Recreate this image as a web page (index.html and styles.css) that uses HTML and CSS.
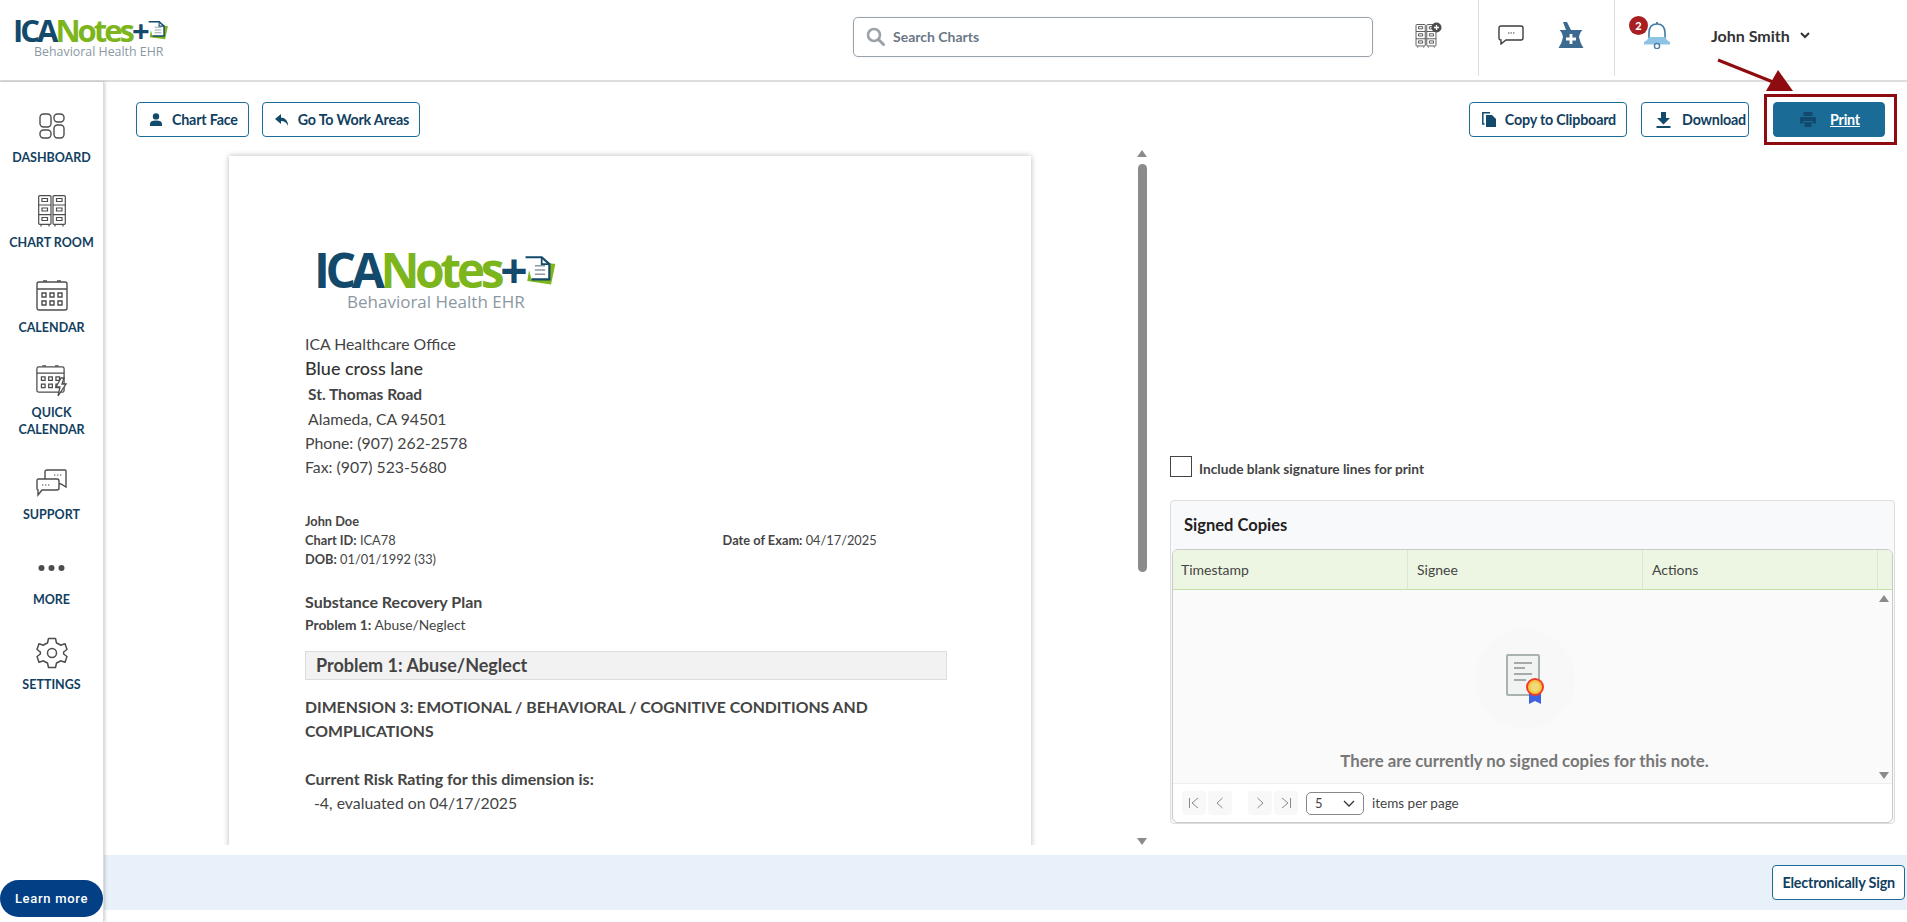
FILE: index.html
```html
<!DOCTYPE html>
<html lang="en">
<head>
    <meta charset="UTF-8">
    <title>ICANotes - Print Note</title>
    <link rel="stylesheet" href="styles.css">
</head>
<body>
    <svg class="defs" width="0" height="0">
        <symbol id="doc-mark" viewBox="0 0 40 40">
            <path d="M9 9 L38 13 L33 37 L5 33 Z" fill="#7db51c"/>
            <path d="M3 5 H22 L31 13 V31 H10" fill="#fff" stroke="#134a6b" stroke-width="2.6"/>
            <path d="M22 5 V13 H31" fill="none" stroke="#134a6b" stroke-width="2"/>
            <path d="M14 15 H26 M14 20 H26 M14 25 H26" stroke="#8b98a3" stroke-width="1.6"/>
        </symbol>
        <symbol id="cabinet" viewBox="0 0 28 32">
            <g fill="none" stroke="#4d4d4d" stroke-width="1.2">
                <rect x="0.7" y="0.7" width="12.3" height="28.6" rx="1"/>
                <rect x="15" y="0.7" width="12.3" height="28.6" rx="1"/>
                <path d="M0.7 10 H13 M0.7 19.7 H13 M15 10 H27.3 M15 19.7 H27.3 M3 30 V31.5 M11 30 V31.5 M17 30 V31.5 M25 30 V31.5"/>
                <path d="M4 3.5 H9.5 V6.5 H4 Z M4 13 H9.5 V16 H4 Z M4 22.5 H9.5 V25.5 H4 Z M18.5 3.5 H24 V6.5 H18.5 Z M18.5 13 H24 V16 H18.5 Z M18.5 22.5 H24 V25.5 H18.5 Z"/>
            </g>
        </symbol>
        <symbol id="calendar" viewBox="0 0 32 32">
            <g fill="none" stroke="#4d4d4d" stroke-width="1.4">
                <rect x="1" y="2" width="30" height="28" rx="2"/>
                <path d="M1 9 H31 M7 1 H11 M21 1 H25"/>
                <path d="M6 13 H10 V17 H6 Z M14 13 H18 V17 H14 Z M22 13 H26 V17 H22 Z M6 21 H10 V25 H6 Z M14 21 H18 V25 H14 Z M22 21 H26 V25 H22 Z"/>
            </g>
        </symbol>
    </svg>

    <header class="topbar">
        <div class="logo logo-small">
            <div class="logo-main"><span class="logo-blue">ICA</span><span class="logo-green">Notes</span><span class="logo-blue logo-plus">+</span><svg class="logo-doc"><use href="#doc-mark"/></svg></div>
            <div class="logo-sub">Behavioral Health EHR</div>
        </div>
        <div class="search">
            <svg width="19" height="19" viewBox="0 0 19 19"><circle cx="8" cy="8" r="6" fill="none" stroke="#9aa1a8" stroke-width="2.6"/><path d="M12.5 12.5 L17.5 17.5" stroke="#9aa1a8" stroke-width="3" stroke-linecap="round"/></svg>
            <span>Search Charts</span>
        </div>
        <div class="top-icons">
            <div class="top-group first-group">
                <svg width="27" height="26" viewBox="0 0 27 26">
                    <use href="#cabinet" x="0" y="2" width="22" height="24"/>
                    <circle cx="21.5" cy="5.5" r="5" fill="#4d4d4d"/>
                    <path d="M19 5.5 H24 M21.5 3 V8" stroke="#fff" stroke-width="1.3"/>
                </svg>
            </div>
            <div class="top-group middle-group">
                <svg width="26" height="20" viewBox="0 0 26 20"><path d="M3 1 H23 Q25 1 25 3 V13 Q25 15 23 15 H8 L3 19 V15 Q1 15 1 13 V3 Q1 1 3 1 Z" fill="#fff" stroke="#3d3d3d" stroke-width="1.4"/><path d="M10 8 H11.4 M12.5 8 H13.9 M15 8 H16.4" stroke="#3d3d3d"/></svg>
                <svg width="26" height="27" viewBox="0 0 26 27"><path d="M5 0 L9 0 L13 8 H24.5 Q22 10 21 15 Q22 21 25.5 26 H0.5 Q4 21 5 15 Q4 10 1.5 8 H8 Z" fill="#3c6a90"/><path d="M13 12 V22 M8 17 H18" stroke="#fff" stroke-width="2.8"/></svg>
            </div>
            <div class="top-group user-group">
                <div class="bell">
                    <span class="badge">2</span>
                    <svg width="28" height="28" viewBox="0 0 28 28"><path d="M6 21 V12 C6 6 9 3 14 3 C19 3 22 6 22 12 V21" fill="none" stroke="#3f7aa6" stroke-width="1.6"/><path d="M1 21 Q5 19 6 16 H22 Q23 19 27 21 V23.5 H1 Z" fill="#8fc3e6"/><circle cx="14" cy="25" r="2.6" fill="none" stroke="#4c7ea5" stroke-width="1.4"/><path d="M14 1 V3" stroke="#4c7ea5" stroke-width="2"/></svg>
                </div>
                <span class="user-name">John Smith</span>
                <svg width="10" height="7" viewBox="0 0 10 7"><path d="M1 1 L5 5 L9 1" fill="none" stroke="#333" stroke-width="2"/></svg>
            </div>
        </div>
    </header>

    <div class="layout">
        <nav class="sidebar">
            <a class="nav-item">
                <svg width="26" height="26" viewBox="0 0 26 26"><g fill="none" stroke="#4d4d4d" stroke-width="1.4"><rect x="1" y="1" width="11" height="13" rx="3.5"/><rect x="15" y="1" width="10" height="8" rx="3.5"/><rect x="1" y="17" width="11" height="8" rx="3.5"/><rect x="15" y="12" width="10" height="13" rx="3.5"/></g></svg>
                <span>DASHBOARD</span>
            </a>
            <a class="nav-item">
                <svg width="28" height="32"><use href="#cabinet"/></svg>
                <span>CHART ROOM</span>
            </a>
            <a class="nav-item">
                <svg width="32" height="32"><use href="#calendar"/></svg>
                <span>CALENDAR</span>
            </a>
            <a class="nav-item">
                <svg width="31" height="32" viewBox="0 0 31 32"><use href="#calendar" width="29" height="29"/><path d="M25 13 L20 22 H24 L22 31 L30 19 H26 L28 13 Z" fill="#fff" stroke="#4d4d4d" stroke-width="1.3"/></svg>
                <span>QUICK<br>CALENDAR</span>
            </a>
            <a class="nav-item">
                <svg width="31" height="28" viewBox="0 0 31 28"><g fill="#fff" stroke="#4d4d4d" stroke-width="1.4"><path d="M11 1 H29 Q30 1 30 2 V18 L25 15 H11 Q9 15 9 13 V3 Q9 1 11 1 Z"/><path d="M2 10 H21 Q23 10 23 12 V19 Q23 21 21 21 H6 L2 26 V21 Q1 21 1 19 V12 Q1 10 2 10 Z"/></g><path d="M18 6 H19.4 M21 6 H22.4 M24 6 H25.4 M6 16 H7.4 M9 16 H10.4 M12 16 H13.4" stroke="#4d4d4d"/></svg>
                <span>SUPPORT</span>
            </a>
            <a class="nav-item">
                <svg width="27" height="26" viewBox="0 0 27 26"><circle cx="3.5" cy="13" r="3" fill="#4d4d4d"/><circle cx="13.5" cy="13" r="3" fill="#4d4d4d"/><circle cx="23.5" cy="13" r="3" fill="#4d4d4d"/></svg>
                <span>MORE</span>
            </a>
            <a class="nav-item">
                <svg width="32" height="32" viewBox="0 0 32 32"><g fill="none" stroke="#4d4d4d" stroke-width="1.5" stroke-linejoin="round"><path d="M12.5 1.5 H19.5 L20.5 6 Q23 7 24.5 8.2 L29 6.8 L31 12.5 L27.6 15 Q27.8 16 27.6 17 L31 19.5 L29 25.2 L24.5 23.8 Q23 25 20.5 26 L19.5 30.5 H12.5 L11.5 26 Q9 25 7.5 23.8 L3 25.2 L1 19.5 L4.4 17 Q4.2 16 4.4 15 L1 12.5 L3 6.8 L7.5 8.2 Q9 7 11.5 6 Z"/><circle cx="16" cy="16" r="4.5"/></g></svg>
                <span>SETTINGS</span>
            </a>
            <button class="learn-more">Learn more</button>
        </nav>

        <main class="content">
            <div class="toolbar">
                <button class="btn">
                    <svg width="14" height="13" viewBox="0 0 14 13"><circle cx="7" cy="3.4" r="3.2" fill="#134a6b"/><path d="M1 13 V11 Q1 7.6 7 7.6 Q13 7.6 13 11 V13 Z" fill="#134a6b"/></svg>
                    Chart Face
                </button>
                <button class="btn">
                    <svg width="14" height="12" viewBox="0 0 14 12"><path d="M6 0 L0 5 L6 10 V7 Q11 7 13 12 Q13 4 6 3.4 Z" fill="#134a6b"/></svg>
                    Go To Work Areas
                </button>
                <div class="toolbar-right">
                    <button class="btn">
                        <svg width="14" height="15" viewBox="0 0 14 15"><path d="M4 3 H10 L14 7 V15 H4 Z" fill="#134a6b"/><path d="M2.5 12 H0.8 V0.8 H8" fill="none" stroke="#134a6b" stroke-width="1.5"/></svg>
                        Copy to Clipboard
                    </button>
                    <button class="btn btn-wide">
                        <svg width="15" height="16" viewBox="0 0 15 16"><path d="M5 0 H10 V6 H14 L7.5 12.5 L1 6 H5 Z M0.5 14 H14.5 V16 H0.5 Z" fill="#134a6b"/></svg>
                        Download
                    </button>
                    <button class="btn btn-print">
                        <svg width="16" height="15" viewBox="0 0 16 15"><path d="M3.5 0 H12.5 V4 H3.5 Z M1.5 5 H14.5 Q16 5 16 6.5 V11.5 H12.5 V9 H3.5 V11.5 H0 V6.5 Q0 5 1.5 5 Z M4.5 10 H11.5 V15 H4.5 Z" fill="#124a6e"/></svg>
                        <span>Print</span>
                    </button>
                </div>
            </div>

            <div class="panes">
                <div class="doc-pane">
                    <div class="doc-scroll">
                        <article class="paper">
                            <div class="logo logo-large">
                                <div class="logo-main"><span class="logo-blue">ICA</span><span class="logo-green">Notes</span><span class="logo-blue logo-plus">+</span><svg class="logo-doc"><use href="#doc-mark"/></svg></div>
                                <div class="logo-sub">Behavioral Health EHR</div>
                            </div>
                            <div class="office">
                                <p>ICA Healthcare Office</p>
                                <p class="office-name">Blue cross lane</p>
                                <p class="office-street">St. Thomas Road</p>
                                <p class="indent">Alameda, CA 94501</p>
                                <p>Phone: (907) 262-2578</p>
                                <p>Fax: (907) 523-5680</p>
                            </div>
                            <div class="patient">
                                <p><b>John Doe</b></p>
                                <p class="patient-row"><span><b>Chart ID:</b> ICA78</span><span class="exam-date"><b>Date of Exam:</b> 04/17/2025</span></p>
                                <p><b>DOB:</b> 01/01/1992 (33)</p>
                            </div>
                            <h3 class="plan-title">Substance Recovery Plan</h3>
                            <p class="plan-problem"><b>Problem 1:</b> Abuse/Neglect</p>
                            <h2 class="problem-box">Problem 1: Abuse/Neglect</h2>
                            <p class="dimension">DIMENSION 3: EMOTIONAL / BEHAVIORAL / COGNITIVE CONDITIONS AND COMPLICATIONS</p>
                            <p class="risk-label">Current Risk Rating for this dimension is:</p>
                            <p class="risk-value">-4, evaluated on 04/17/2025</p>
                        </article>
                    </div>
                    <div class="scrollbar">
                        <i class="arrow-up"></i>
                        <div class="track"><div class="thumb"></div></div>
                        <i class="arrow-down"></i>
                    </div>
                </div>

                <aside class="side-pane">
                    <label class="blank-lines"><span class="checkbox"></span>Include blank signature lines for print</label>
                    <section class="card">
                        <h4 class="card-title">Signed Copies</h4>
                        <div class="grid">
                            <div class="grid-head">
                                <div class="col">Timestamp</div>
                                <div class="col">Signee</div>
                                <div class="col">Actions</div>
                                <div class="col-gap"></div>
                            </div>
                            <div class="grid-body">
                                <div class="empty">
                                    <div class="empty-icon">
                                        <svg width="38" height="50" viewBox="0 0 38 50">
                                            <rect x="1" y="1" width="32" height="40" rx="1" fill="#f1f3f3" stroke="#aab2b0" stroke-width="2"/>
                                            <path d="M8 9 H26 M8 14 H19 M8 20 H26 M8 26 H20" stroke="#a3aaa9" stroke-width="1.8"/>
                                            <path d="M23 38 H35 V50 L29 47 L23 50 Z" fill="#3f62e0"/>
                                            <circle cx="29" cy="33" r="9" fill="#ef3b2d"/>
                                            <circle cx="29" cy="33" r="7" fill="#f6c93c"/>
                                            <circle cx="29" cy="33" r="4.5" fill="#efd97e"/>
                                        </svg>
                                    </div>
                                    <p>There are currently no signed copies for this note.</p>
                                </div>
                                <div class="grid-scroll">
                                    <i class="tri-up"></i>
                                    <i class="tri-down"></i>
                                </div>
                            </div>
                            <div class="pager">
                                <span class="page-btn"><svg width="12" height="12" viewBox="0 0 12 12"><path d="M1.5 1 V11 M10 1 L4 6 L10 11" fill="none" stroke="#8a8a8a"/></svg></span>
                                <span class="page-btn"><svg width="12" height="12" viewBox="0 0 12 12"><path d="M8.5 1 L3 6 L8.5 11" fill="none" stroke="#8a8a8a"/></svg></span>
                                <span class="page-btn page-next"><svg width="12" height="12" viewBox="0 0 12 12"><path d="M3.5 1 L9 6 L3.5 11" fill="none" stroke="#8a8a8a"/></svg></span>
                                <span class="page-btn"><svg width="12" height="12" viewBox="0 0 12 12"><path d="M2 1 L8 6 L2 11 M10.5 1 V11" fill="none" stroke="#8a8a8a"/></svg></span>
                                <span class="page-select">5<svg width="12" height="7" viewBox="0 0 12 7"><path d="M1 1 L6 6 L11 1" fill="none" stroke="#333" stroke-width="1.3"/></svg></span>
                                <span class="page-label">items per page</span>
                            </div>
                        </div>
                    </section>
                </aside>
            </div>

            <div class="sign-bar">
                <button class="btn btn-sign">Electronically Sign</button>
            </div>
        </main>
    </div>

    <!-- callout on the print button -->
    <div class="print-callout"></div>
    <svg class="print-arrow" width="90" height="40" viewBox="0 0 90 40">
        <path d="M2 2 L62 26" stroke="#8e0b0f" stroke-width="3"/>
        <path d="M77 33 L50 33 L62 12 Z" fill="#8e0b0f"/>
    </svg>
</body>
</html>
```

FILE: styles.css
```css
* {
    box-sizing: border-box;
}
html, body {
    height: 100%;
}
body {
    margin: 0;
    font-family: "Lato", "Open Sans", sans-serif;
    color: #444;
    background: #fff;
    overflow: hidden;
    display: flex;
    flex-direction: column;
}
p, h2, h3, h4 {
    margin: 0;
}
.defs {
    display: block;
    height: 0;
}

/* Logo */
.logo {
    font-family: "Open Sans", sans-serif;
}
.logo-main {
    display: flex;
    align-items: center;
    font-weight: 700;
    white-space: nowrap;
}
.logo-blue {
    color: #134a6b;
}
.logo-green {
    color: #7db51c;
}
.logo-sub {
    color: #8b98a3;
    white-space: nowrap;
}
.logo-doc {
    flex: none;
}
.logo-small {
    width: 165px;
    margin-left: 13px;
}
.logo-small .logo-main {
    font-size: 31px;
    letter-spacing: -3px;
    line-height: 30px;
}
.logo-small .logo-doc {
    width: 22px;
    height: 24px;
    margin-left: 0;
}
.logo-small .logo-sub {
    font-size: 12.4px;
    margin-left: 21px;
    line-height: 14px;
}
.logo-large {
    width: 260px;
    margin-left: 9px;
}
.logo-large .logo-main {
    font-size: 48px;
    letter-spacing: -4.4px;
    line-height: 42px;
}
.logo-large .logo-doc {
    width: 34px;
    height: 36px;
    margin-left: 0;
}
.logo-large .logo-sub {
    font-size: 17px;
    margin: 1px 0 0 33px;
    line-height: 20px;
}

/* Top bar */
.topbar {
    height: 82px;
    flex: none;
    display: flex;
    align-items: center;
    padding-bottom: 7px;
    border-bottom: 2px solid #ddd;
}
.search {
    width: 520px;
    height: 40px;
    margin-left: 675px;
    display: flex;
    align-items: center;
    gap: 8px;
    padding-left: 12px;
    border: 1px solid #9aa3ad;
    border-radius: 5px;
    box-shadow: 0 0 2px rgba(0,0,0,0.1);
    color: #6b7785;
    font-size: 14px;
    font-weight: 700;
}
.top-icons {
    display: flex;
    align-self: flex-start;
    height: 76px;
}
.top-group {
    display: flex;
    align-items: center;
    padding-bottom: 6px;
}
.first-group {
    margin-left: 42px;
    padding-right: 36px;
    border-right: 1px solid #ddd;
}
.middle-group {
    gap: 34px;
    padding: 0 30px 6px 19px;
    border-right: 1px solid #ddd;
}
.user-group {
    padding-left: 28px;
}
.bell {
    position: relative;
    height: 28px;
    margin-top: -1px;
}
.badge {
    position: absolute;
    left: -14px;
    top: -5px;
    width: 19px;
    height: 19px;
    border-radius: 50%;
    background: #a81f22;
    color: #fff;
    font-size: 11px;
    font-weight: 900;
    line-height: 19px;
    text-align: center;
}
.user-name {
    margin: 0 10px 0 40px;
    font-size: 16px;
    font-weight: 700;
    color: #333;
    white-space: nowrap;
}

/* Layout */
.layout {
    flex: 1;
    display: flex;
    min-height: 0;
}

/* Sidebar */
.sidebar {
    width: 104px;
    flex: none;
    display: flex;
    flex-direction: column;
    align-items: center;
    padding: 26px 0 5px;
    gap: 27px;
    border-right: 1px solid #ddd;
    box-shadow: 1px 0 3px rgba(0,0,0,0.2);
    z-index: 1;
}
.nav-item {
    display: flex;
    flex-direction: column;
    align-items: center;
    width: 100%;
    color: #123f5f;
    font-size: 12.5px;
    font-weight: 700;
    line-height: 17px;
    text-align: center;
}
.nav-item svg {
    height: 36px;
    padding: 2px 0;
    margin-bottom: 5px;
}
.learn-more {
    margin-top: auto;
    width: 103px;
    height: 37px;
    align-self: flex-start;
    border: none;
    border-radius: 19px;
    background: #033f85;
    color: #fff;
    font-family: "Roboto", sans-serif;
    font-size: 13px;
    font-weight: 500;
    letter-spacing: 0.7px;
}

/* Main content */
.content {
    flex: 1;
    min-width: 0;
    display: flex;
    flex-direction: column;
}
.toolbar {
    display: flex;
    align-items: center;
    gap: 13px;
    padding: 20px 22px 13px 32px;
}
.toolbar-right {
    margin-left: auto;
    display: flex;
    gap: 14px;
}
.btn {
    height: 35px;
    display: inline-flex;
    align-items: center;
    gap: 9px;
    padding: 0 10px 0 12px;
    background: #fff;
    border: 1px solid #1b6c96;
    border-radius: 4px;
    color: #123f5f;
    font-family: inherit;
    font-size: 14.3px;
    font-weight: 700;
    letter-spacing: -0.2px;
    white-space: nowrap;
}
.btn-wide {
    gap: 11px;
    padding: 0 2px 0 14px;
}
.btn-print {
    width: 112px;
    margin-left: 10px;
    justify-content: center;
    gap: 14px;
    background: #1b6b97;
    color: #fff;
}
.btn-print span {
    text-decoration: underline;
}

/* Panes */
.panes {
    height: 695px;
    flex: none;
    display: flex;
}
.doc-pane {
    width: 1066px;
    flex: none;
    display: flex;
}
.doc-scroll {
    flex: 1;
    overflow: hidden;
    padding: 6px 0 0 125px;
}
.paper {
    width: 802px;
    height: 1200px;
    padding: 93px 84px 0 76px;
    background: #fff;
    box-shadow: 0 0 6px rgba(0,0,0,0.28);
    font-size: 15.8px;
    line-height: 24px;
    color: #444;
}
.office {
    margin-top: 20px;
}
.office-name {
    font-size: 18px;
    font-weight: 500;
    line-height: 25px;
    color: #333;
}
.office-street {
    padding-left: 3px;
    font-weight: 700;
    font-size: 15.5px;
    line-height: 26px;
}
.indent {
    padding-left: 3px;
}
.patient {
    margin-top: 33px;
    font-size: 12.8px;
    line-height: 18.8px;
}
.patient-row {
    display: flex;
}
.exam-date {
    margin-left: 327px;
}
.plan-title {
    margin-top: 22px;
    font-size: 16px;
    font-weight: 700;
    line-height: 24px;
}
.plan-problem {
    font-size: 13.8px;
    line-height: 22px;
}
.problem-box {
    margin-top: 15px;
    padding-left: 10px;
    height: 29px;
    background: #f2f2f2;
    border: 1px solid #ddd;
    font-size: 18px;
    font-weight: 700;
    line-height: 27px;
}
.dimension {
    margin-top: 15px;
    font-weight: 700;
}
.risk-label {
    margin-top: 24px;
    font-size: 16px;
    font-weight: 700;
}
.risk-value {
    padding-left: 9px;
}

/* Doc scrollbar */
.scrollbar {
    width: 16px;
    margin-right: 20px;
    display: flex;
    flex-direction: column;
    align-items: center;
}
.track {
    flex: 1;
    width: 9px;
    padding-top: 7px;
}
.thumb {
    height: 408px;
    border-radius: 5px;
    background: #8b8b8b;
}
.arrow-up, .arrow-down, .tri-up, .tri-down {
    display: block;
    width: 0;
    height: 0;
    border-left: 5px solid transparent;
    border-right: 5px solid transparent;
}
.arrow-up, .tri-up {
    border-bottom: 7px solid #8b8b8b;
}
.arrow-down, .tri-down {
    border-top: 7px solid #8b8b8b;
}

/* Right side */
.side-pane {
    flex: 1;
    min-width: 0;
    padding: 306px 12px 0 0;
}
.blank-lines {
    display: flex;
    align-items: flex-end;
    gap: 7px;
    height: 21px;
    font-size: 13.7px;
    font-weight: 700;
    color: #444;
}
.checkbox {
    width: 22px;
    height: 21px;
    background: #fff;
    border: 1px solid #444;
}
.card {
    margin-top: 23px;
    height: 324px;
    padding: 0 1px 1px;
    background: #f8f9fa;
    border: 1px solid #ddd;
    border-radius: 4px;
}
.card-title {
    height: 48px;
    padding-left: 12px;
    font-size: 16.5px;
    font-weight: 700;
    line-height: 49px;
    color: #222;
}
.grid {
    height: 274px;
    display: flex;
    flex-direction: column;
    background: #fff;
    border: 1px solid #c8cbc9;
    border-radius: 6px;
    overflow: hidden;
}
.grid-head {
    height: 40px;
    flex: none;
    display: flex;
    background: #edf6e2;
    border-bottom: 1px solid #c5dfa6;
    font-size: 14px;
    line-height: 39px;
    color: #444;
}
.col {
    width: 235px;
    padding-left: 8px;
    border-right: 1px solid #dde6d3;
}
.col + .col {
    padding-left: 9px;
}
.col-gap {
    flex: 1;
}
.grid-body {
    flex: 1;
    display: flex;
    background: #fafafa;
    min-height: 0;
    border-bottom: 1px solid #eee;
}
.empty {
    flex: 1;
    display: flex;
    flex-direction: column;
    align-items: center;
    padding-top: 61px;
    color: #777;
    font-size: 16.8px;
    font-weight: 700;
}
.empty-icon {
    width: 100px;
    height: 100px;
    margin-top: -22px;
    display: flex;
    align-items: center;
    justify-content: center;
    border-radius: 50%;
    background: #f8f8f9;
}
.empty p {
    margin-top: 21px;
}
.grid-scroll {
    width: 16px;
    padding: 5px 0 4px;
    display: flex;
    flex-direction: column;
    align-items: center;
    justify-content: space-between;
}
.pager {
    height: 38px;
    flex: none;
    display: flex;
    align-items: center;
    padding-left: 9px;
    gap: 2px;
    font-size: 13.5px;
    color: #444;
}
.page-btn {
    width: 24px;
    height: 24px;
    display: flex;
    align-items: center;
    justify-content: center;
    border-radius: 4px;
    background: #f8f8f8;
}
.page-next {
    margin-left: 14px;
}
.page-select {
    width: 58px;
    height: 23px;
    margin-left: 6px;
    padding: 0 8px;
    display: flex;
    align-items: center;
    justify-content: space-between;
    border: 1px solid #888;
    border-radius: 5px;
    font-size: 13px;
}
.page-label {
    margin-left: 6px;
}

/* Bottom bar */
.sign-bar {
    height: 55px;
    margin-top: 10px;
    flex: none;
    display: flex;
    align-items: center;
    justify-content: flex-end;
    padding-right: 2px;
    background: #e8f0f9;
}
.btn-sign {
    padding: 0 9px;
    font-size: 14.4px;
}

/* Callout */
.print-callout {
    position: absolute;
    left: 1764px;
    top: 94px;
    width: 133px;
    height: 51px;
    border: 3px solid #8e0b0f;
}
.print-arrow {
    position: absolute;
    left: 1716px;
    top: 58px;
}
```
